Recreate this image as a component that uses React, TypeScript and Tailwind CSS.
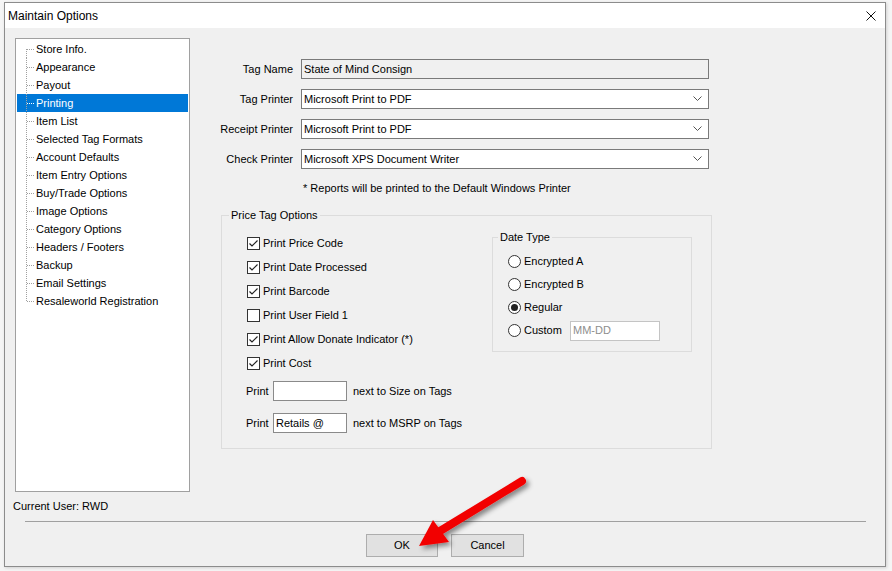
import React from 'react';

const font = { fontFamily: '"Liberation Sans", Arial, sans-serif' };

const treeItems = [
  'Store Info.',
  'Appearance',
  'Payout',
  'Printing',
  'Item List',
  'Selected Tag Formats',
  'Account Defaults',
  'Item Entry Options',
  'Buy/Trade Options',
  'Image Options',
  'Category Options',
  'Headers / Footers',
  'Backup',
  'Email Settings',
  'Resaleworld Registration',
];

const printers = [
  { label: 'Tag Printer', value: 'Microsoft Print to PDF' },
  { label: 'Receipt Printer', value: 'Microsoft Print to PDF' },
  { label: 'Check Printer', value: 'Microsoft XPS Document Writer' },
];

const tagChecks = [
  { label: 'Print Price Code', on: true },
  { label: 'Print Date Processed', on: true },
  { label: 'Print Barcode', on: true },
  { label: 'Print User Field 1', on: false },
  { label: 'Print Allow Donate Indicator (*)', on: true },
  { label: 'Print Cost', on: true },
];

const dateTypes = ['Encrypted A', 'Encrypted B', 'Regular', 'Custom'];

function Connector({ first, last, light }: { first: boolean; last: boolean; light: boolean }) {
  const c = light ? '#ffffff' : '#a0a0a0';
  return (
    <svg width="18" height="18" className="shrink-0">
      <line x1="9.5" y1={first ? 9 : 0} x2="9.5" y2={last ? 9.5 : 18} stroke="#a0a0a0" strokeDasharray="1 1" />
      <line x1="10" y1="9.5" x2="17" y2="9.5" stroke={c} strokeDasharray="1 1" />
    </svg>
  );
}

function CheckBox({ on }: { on: boolean }) {
  return (
    <span className="flex h-[13px] w-[13px] shrink-0 items-center justify-center border border-[#333333] bg-white">
      {on && (
        <svg width="11" height="11" viewBox="0 0 11 11">
          <path d="M1.5 5.5 L4 8 L9.5 2.5" fill="none" stroke="#222222" strokeWidth="1.2" />
        </svg>
      )}
    </span>
  );
}

function Radio({ on }: { on: boolean }) {
  return (
    <span className="flex h-[13px] w-[13px] shrink-0 items-center justify-center rounded-full border border-[#333333] bg-white">
      {on && <span className="h-[7px] w-[7px] rounded-full bg-[#222222]" />}
    </span>
  );
}

function Chevron() {
  return (
    <svg width="9" height="6" viewBox="0 0 9 6" className="mr-[6px]">
      <path d="M0.5 0.5 L4.5 4.5 L8.5 0.5" fill="none" stroke="#555555" strokeWidth="1" />
    </svg>
  );
}

export default function App() {
  return (
    <div className="relative h-[571px] w-[892px] overflow-hidden bg-[#f5f5f5] pl-[4px] pt-[2px] text-[11px] text-black" style={font}>
      <div className="flex h-[565px] w-[882px] flex-col border border-[#8c8c8c] bg-[#f0f0f0] shadow-[1px_1px_3px_rgba(0,0,0,0.15)]">
        {/* title bar */}
        <div className="flex h-[25px] items-center justify-between bg-white pl-[3px] pr-[9px]">
          <span className="text-[12px]">Maintain Options</span>
          <svg width="10" height="10" viewBox="0 0 10 10">
            <path d="M0.5 0.5 L9.5 9.5 M9.5 0.5 L0.5 9.5" stroke="#111111" strokeWidth="1" />
          </svg>
        </div>

        <div className="flex">
          {/* tree column */}
          <div className="pl-[10px] pt-[10px]">
            <div className="h-[454px] w-[175px] border border-[#a0a0a0] bg-white pt-[1px]">
              {treeItems.map((item, i) => {
                const sel = item === 'Printing';
                return (
                  <div
                    key={item}
                    className={`mx-[1px] flex h-[18px] items-center ${sel ? 'bg-[#0078d7] text-white' : ''}`}
                  >
                    <Connector first={i === 0} last={i === treeItems.length - 1} light={sel} />
                    <span className="ml-[1px] leading-[18px]">{item}</span>
                  </div>
                );
              })}
            </div>
            <div className="-ml-[2px] mt-[8px] leading-[13px]">Current User: RWD</div>
          </div>

          {/* settings */}
          <div className="ml-[31px] pt-[31px]">
            <div className="space-y-[10px]">
              <div className="flex h-[20px] items-center">
                <span className="flex w-[72px] justify-end whitespace-nowrap">Tag Name</span>
                <div className="ml-[8px] flex h-[20px] w-[408px] items-center border border-[#7a7a7a] bg-[#f0f0f0] pl-[2px]">
                  State of Mind Consign
                </div>
              </div>
              {printers.map((p) => (
                <div key={p.label} className="flex h-[20px] items-center">
                  <span className="flex w-[72px] justify-end whitespace-nowrap">
                    <span className="shrink-0">{p.label}</span>
                  </span>
                  <div className="ml-[8px] flex h-[20px] w-[408px] items-center justify-between border border-[#7a7a7a] bg-white pl-[2px]">
                    <span>{p.value}</span>
                    <Chevron />
                  </div>
                </div>
              ))}
            </div>

            <div className="ml-[82px] mt-[13px] leading-[13px]">* Reports will be printed to the Default Windows Printer</div>

            <fieldset className="mt-[14px] w-[491px] border border-[#dcdcdc]">
              <legend className="ml-[7px] px-[2px] leading-[13px]">Price Tag Options</legend>
              <div className="flex pl-[25px] pt-[9px]">
                <div className="pb-[15px]">
                  {tagChecks.map((c) => (
                    <div key={c.label} className="flex h-[24px] items-center">
                      <CheckBox on={c.on} />
                      <span className="ml-[3px]">{c.label}</span>
                    </div>
                  ))}
                  <div className="mt-[6px] flex h-[20px] items-center">
                    <span className="-ml-[1px] w-[27px]">Print</span>
                    <div className="h-[20px] w-[74px] border border-[#8a8a8a] bg-white" />
                    <span className="ml-[6px]">next to Size on Tags</span>
                  </div>
                  <div className="mt-[12px] flex h-[20px] items-center">
                    <span className="-ml-[1px] w-[27px]">Print</span>
                    <div className="flex h-[20px] w-[74px] items-center border border-[#8a8a8a] bg-white pl-[2px]">Retails @</div>
                    <span className="ml-[6px]">next to MSRP on Tags</span>
                  </div>
                </div>

                <fieldset className="ml-auto mr-[19px] h-fit w-[200px] border border-[#dcdcdc]">
                  <legend className="ml-[5px] px-[2px] leading-[13px]">Date Type</legend>
                  <div className="pb-[9px] pl-[15px] pt-[6px]">
                    {dateTypes.map((d) => (
                      <div key={d} className="flex h-[23px] items-center">
                        <Radio on={d === 'Regular'} />
                        <span className={`ml-[3px] ${d === 'Custom' ? 'w-[46px]' : ''}`}>{d}</span>
                        {d === 'Custom' && (
                          <div className="flex h-[20px] w-[90px] items-center border border-[#c4c4c4] bg-white pl-[2px] text-[#8d8d8d]">
                            MM-DD
                          </div>
                        )}
                      </div>
                    ))}
                  </div>
                </fieldset>
              </div>
            </fieldset>
          </div>
        </div>

        <div className="ml-[20px] mr-[19px] mt-[8px] h-px bg-[#a0a0a0]" />

        <div className="mt-[12px] flex justify-center gap-[13px]">
          <button className="h-[23px] w-[72px] border border-[#adadad] bg-[#e1e1e1]">OK</button>
          <button className="h-[23px] w-[73px] border border-[#adadad] bg-[#e1e1e1]">Cancel</button>
        </div>
      </div>

      {/* red annotation arrow */}
      <svg className="pointer-events-none absolute left-0 top-0" width="892" height="571">
        <defs>
          <filter id="sh" x="-20%" y="-20%" width="140%" height="140%">
            <feDropShadow dx="3" dy="3" stdDeviation="2.5" floodColor="#000" floodOpacity="0.45" />
          </filter>
        </defs>
        <g filter="url(#sh)">
          <line x1="522" y1="481" x2="440" y2="531" stroke="#f20000" strokeWidth="8" strokeLinecap="round" />
          <polygon points="419,546 433,520 449,542" fill="#f20000" />
        </g>
      </svg>
    </div>
  );
}
